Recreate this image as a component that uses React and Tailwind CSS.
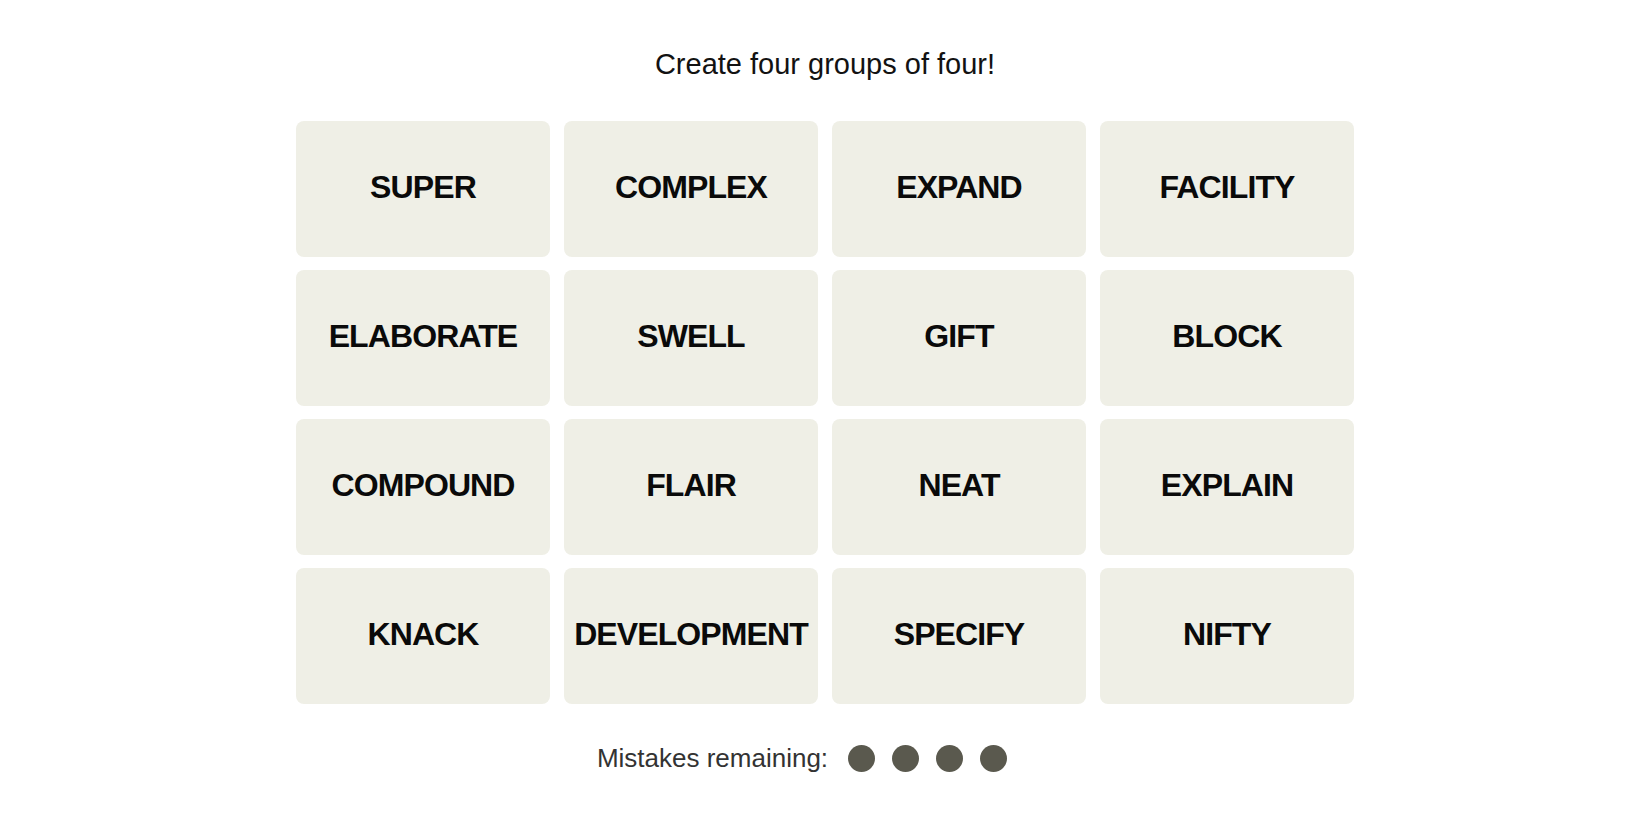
const words = [
  "SUPER", "COMPLEX", "EXPAND", "FACILITY",
  "ELABORATE", "SWELL", "GIFT", "BLOCK",
  "COMPOUND", "FLAIR", "NEAT", "EXPLAIN",
  "KNACK", "DEVELOPMENT", "SPECIFY", "NIFTY",
];

function Tile({ word }) {
  return (
    <button className="flex h-[136px] w-[254px] items-center justify-center rounded-lg bg-[#efefe6] pb-[4px] text-[32px] font-bold tracking-[-0.9px] text-[#0a0a0a]">
      {word}
    </button>
  );
}

export default function App() {
  return (
    <div className="flex min-h-[825px] w-full flex-col items-center bg-white pt-[46px] font-['Liberation_Sans',Arial,sans-serif]">
      <p className="text-[29px] leading-[36px] text-[#121212]">
        Create four groups of four!
      </p>
      <div className="mt-[39px] grid grid-cols-4 gap-x-[14px] gap-y-[13px]">
        {words.map((w) => (
          <Tile key={w} word={w} />
        ))}
      </div>
      <div className="mr-[46px] mt-[40px] flex items-center">
        <span className="text-[26px] leading-[28px] text-[#333333]">Mistakes remaining:</span>
        <div className="ml-[20px] flex gap-[17px]">
          {[0, 1, 2, 3].map((i) => (
            <span key={i} className="h-[27px] w-[27px] rounded-full bg-[#5a594e]" />
          ))}
        </div>
      </div>
    </div>
  );
}
